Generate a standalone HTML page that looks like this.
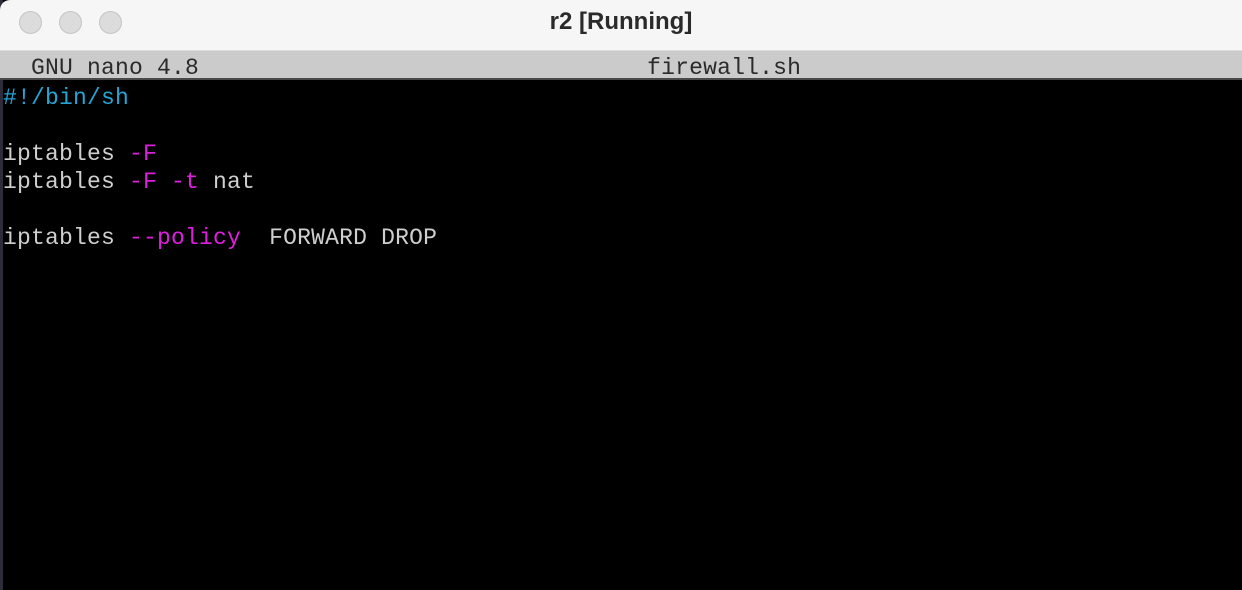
<!DOCTYPE html>
<html><head><style>
html,body{margin:0;padding:0;width:1242px;height:590px;overflow:hidden;background:#000;}
.title{position:absolute;left:0;top:0;width:1242px;height:50px;background:#f6f6f6;border-top-left-radius:10px;}
.dot{position:absolute;top:11px;width:23px;height:23px;border-radius:50%;background:#dcdcdc;border:1px solid #c4c4c4;box-sizing:border-box;}
.t{position:absolute;left:0;width:1242px;top:8px;text-align:center;font:bold 24px "Liberation Sans",sans-serif;color:#2a2a2a;}
.bar{position:absolute;left:0;top:50px;width:1242px;height:30px;background:#cbcbcb;border-top:1px solid #dedede;border-bottom:2px solid #4a4a4a;box-sizing:border-box;}
.leftedge{position:absolute;left:0;top:0;width:3px;height:590px;background:#2e2c3a;}
.txt{position:absolute;left:3px;font:23px "Liberation Mono",monospace;letter-spacing:0.2px;white-space:pre;line-height:28px;}
.w{color:#cfcfcf}.m{color:#e01ee0}.c{color:#25a4d4}.b{color:#2a2a2a}
</style></head><body>
<div class="leftedge"></div>
<div class="title">
<div class="dot" style="left:19px"></div><div class="dot" style="left:59px"></div><div class="dot" style="left:99px"></div>
<div class="t">r2 [Running]</div>
</div>
<div class="bar"></div>
<div class="txt b" style="top:54px">  GNU nano 4.8                                firewall.sh</div>
<div class="txt" style="top:84px"><span class="c">#!/bin/sh</span>

<span class="w">iptables </span><span class="m">-F</span>
<span class="w">iptables </span><span class="m">-F -t</span><span class="w"> nat</span>

<span class="w">iptables </span><span class="m">--policy</span><span class="w">  FORWARD DROP</span></div>
</body></html>
